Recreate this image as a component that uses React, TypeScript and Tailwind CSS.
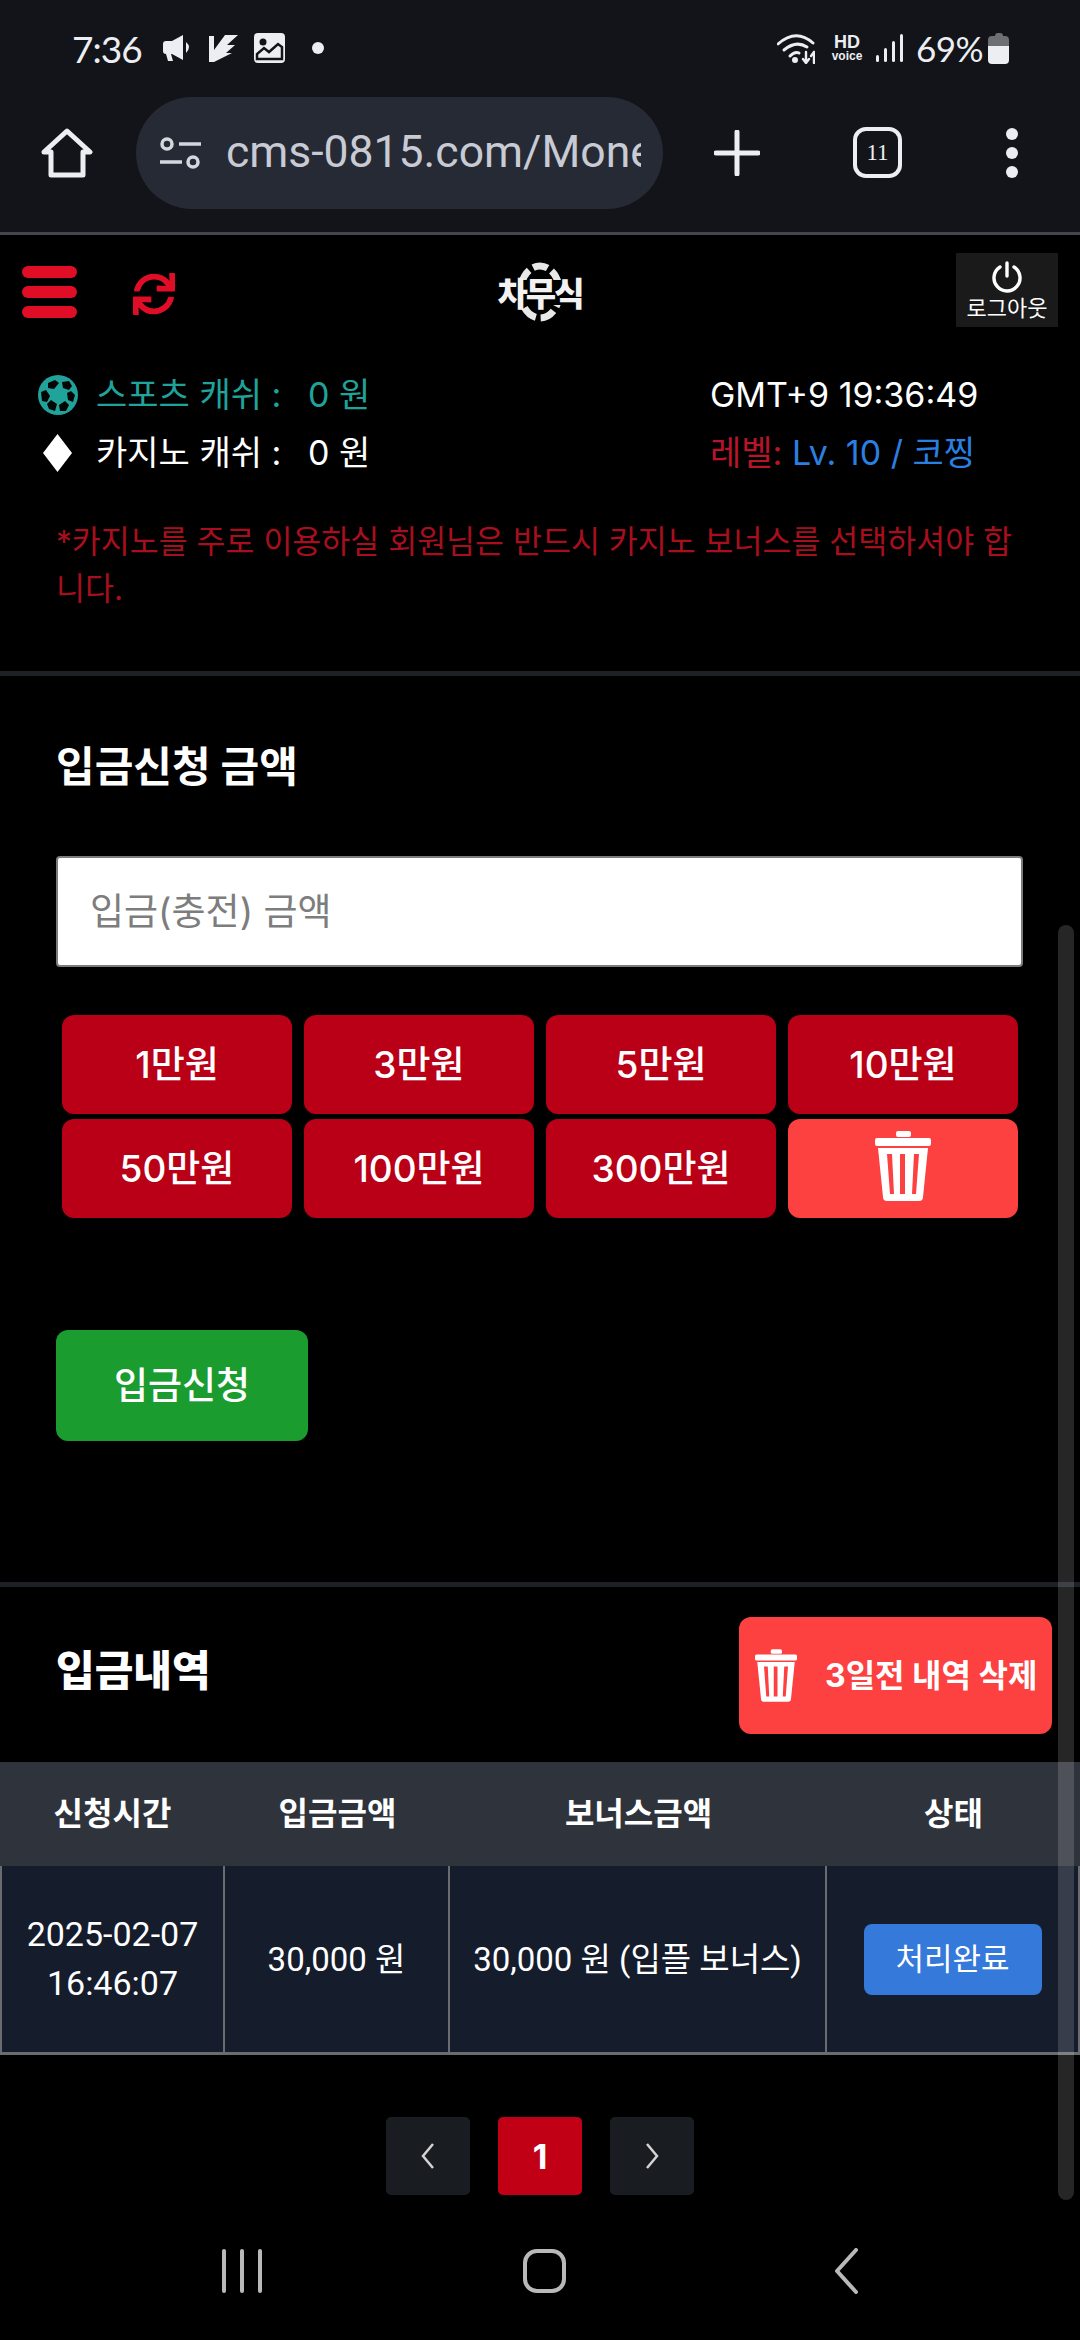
import { FaSync } from "react-icons/fa"

function TrashIcon({ className }: { className: string }) {
  return (
    <svg viewBox="0 0 56 70" className={className} fill="#fff">
      <rect x="21" y="0" width="15" height="6" rx="2" />
      <rect x="0" y="7" width="56" height="8" rx="2" />
      <path
        fillRule="evenodd"
        d="M3 17H53L48 66Q48 70 44 70H12Q8 70 8 66ZM12 23L15 63H19L17 23ZM25 23V63H30V23ZM39 23L37 63H41L44 23Z"
      />
    </svg>
  )
}

function SoccerIcon() {
  return (
    <svg viewBox="0 0 40 40" className="w-[40px] h-[40px]">
      <circle cx="20" cy="20" r="20" fill="#1fa39a" />
      <g fill="#050505">
        <path d="M10 8L17 5L21 8L16 14L10 13Z" />
        <path d="M24 7L31 6L34 11L31 15L25 13Z" />
        <path d="M3 17L8 15L12 21L9 27L4 26Z" />
        <path d="M29 18L33 16L37 20L35 27L30 25Z" />
        <path d="M9 29L13 25L19 29L17 36L11 34Z" />
        <path d="M21 30L27 26L31 30L28 36L22 36Z" />
      </g>
    </svg>
  )
}

function Chrome() {
  return (
    <div className="h-[235px] bg-[#12141a] border-b-[3px] border-[#44464f] text-[#eceef2]">
      {/* status bar */}
      <div className="flex items-center h-[96px] pl-[72px] pr-[71px]">
        <span className="w-[71px] font-['Lato',sans-serif] text-[37px] leading-none tracking-[-1px]">7:36</span>
        <svg viewBox="0 0 29 26" className="w-[29px] h-[26px] ml-[20px]" fill="#eceef2">
          <path d="M0 9Q0 6 3 6H9L20 0V25L9 19H8L10 26H5L3 19Q0 19 0 16Z" />
          <path d="M23 7Q29 12 23 18Z" />
        </svg>
        <svg viewBox="0 0 29 28" className="w-[29px] h-[28px] ml-[17px]" fill="#eceef2">
          <path d="M0 2H5V16L16 1H29L18 11H26L17 19H23L5 28H0Z" />
        </svg>
        <svg viewBox="0 0 31 30" className="w-[31px] h-[30px] ml-[16px]">
          <rect width="31" height="30" rx="4" fill="#eceef2" />
          <circle cx="9" cy="9" r="3.5" fill="#12141a" />
          <path d="M3 26V21L10 15L15 19L24 11L28 14V26Z" fill="none" stroke="#12141a" strokeWidth="2.5" />
        </svg>
        <span className="w-[12px] h-[12px] rounded-full bg-[#eceef2] ml-[27px]" />
        <div className="flex-1" />
        <svg viewBox="0 0 38 32" className="w-[38px] h-[32px]" fill="none" stroke="#eceef2" strokeWidth="3" strokeLinecap="round">
          <path d="M1 12Q19 -4 36 11" />
          <path d="M7 18Q19 8 30 15" />
          <path d="M13 24Q18 19 22 21" />
          <circle cx="18" cy="28" r="1.5" fill="#eceef2" />
          <path d="M29 20V31M26 27L29 31L32 27" strokeWidth="2.4" />
          <path d="M37 31V20M34 24L37 20" strokeWidth="2.4" />
        </svg>
        <div className="flex flex-col items-center w-[34px] ml-[15px] font-['Liberation_Sans',sans-serif] font-bold">
          <span className="text-[18px] leading-[15px]">HD</span>
          <span className="text-[12px] leading-[12px]">voice</span>
        </div>
        <div className="flex items-end gap-[5px] h-[28px] ml-[12px]">
          <span className="w-[3px] h-[7px] bg-[#eceef2] rounded-full" />
          <span className="w-[3px] h-[14px] bg-[#eceef2] rounded-full" />
          <span className="w-[3px] h-[21px] bg-[#eceef2] rounded-full" />
          <span className="w-[3px] h-[28px] bg-[#eceef2] rounded-full" />
        </div>
        <span className="ml-[13px] w-[68px] font-['Lato',sans-serif] text-[35px] leading-none tracking-[-0.5px]">69%</span>
        <div className="flex flex-col items-center w-[21px] h-[31px] ml-[4px]">
          <span className="w-[8px] h-[3px] bg-[#6e6f73] rounded-t-sm" />
          <span className="w-full h-[10px] bg-[#6e6f73] rounded-t-[4px]" />
          <span className="w-full flex-1 bg-[#eceef2] rounded-b-[4px]" />
        </div>
      </div>
      {/* url bar */}
      <div className="flex items-center h-[113px] pl-[41px]">
        <svg viewBox="0 0 52 50" className="w-[52px] h-[50px]" fill="none" stroke="#eceef2" strokeWidth="5" strokeLinejoin="round">
          <path d="M3 24L26 3L49 24H42V47H10V24Z" />
        </svg>
        <div className="flex items-center w-[527px] h-[112px] ml-[43px] rounded-full bg-[#262a35] pl-[24px]">
          <svg viewBox="0 0 41 34" className="w-[41px] h-[34px] shrink-0" fill="none" stroke="#d5d7de" strokeWidth="3.5">
            <circle cx="7" cy="8" r="5" />
            <path d="M19 8H41M0 26H22" />
            <circle cx="33" cy="26" r="5" />
          </svg>
          <div className="w-[415px] ml-[25px] overflow-hidden whitespace-nowrap font-['Roboto',sans-serif] text-[44.5px] leading-none text-[#c8cbd4]">
            cms-0815.com/Money
          </div>
        </div>
        <svg viewBox="0 0 46 46" className="w-[46px] h-[46px] ml-[51px]" stroke="#eceef2" strokeWidth="5" strokeLinecap="round">
          <path d="M23 2V44M2 23H44" />
        </svg>
        <div className="flex items-center justify-center w-[49px] h-[51px] ml-[93px] rounded-[13px] border-[4px] border-[#eceef2] font-['Liberation_Serif',serif] text-[23px] leading-none">
          11
        </div>
        <div className="flex flex-col gap-[7px] ml-[104px]">
          <span className="w-[12px] h-[12px] rounded-full bg-[#eceef2]" />
          <span className="w-[12px] h-[12px] rounded-full bg-[#eceef2]" />
          <span className="w-[12px] h-[12px] rounded-full bg-[#eceef2]" />
        </div>
      </div>
    </div>
  )
}

function Logo() {
  return (
    <div className="relative flex items-center justify-center w-[90px] h-[60px]">
      <svg viewBox="0 0 46 60" className="absolute left-[22px] top-0 w-[46px] h-[60px]" fill="none">
        <ellipse cx="23" cy="30" rx="19.5" ry="26" stroke="#e8e8e8" strokeWidth="7" strokeDasharray="15 5" />
      </svg>
      <span className="relative bg-black leading-[25px] text-[33px] font-black tracking-[-2px] text-[#f2f2f2] font-['Noto_Sans_CJK_KR',sans-serif]">
        차무식
      </span>
    </div>
  )
}

function TopSection() {
  return (
    <div className="h-[441px] border-b-[5px] border-[#1d2126]">
      <div className="flex items-center h-[110px] pl-[22px] pr-[22px]">
        <div className="flex flex-col gap-[8px] w-[55px] mt-[4px]">
          <span className="h-[12px] rounded-full bg-[#e00d26]" />
          <span className="h-[12px] rounded-full bg-[#e00d26]" />
          <span className="h-[12px] rounded-full bg-[#e00d26]" />
        </div>
        <FaSync className="w-[42px] h-[42px] ml-[56px] mt-[8px] text-[#e00d26]" />
        <div className="ml-[320px] mt-[4px]">
          <Logo />
        </div>
        <div className="flex flex-col items-center justify-center w-[102px] h-[74px] ml-auto bg-[#1a1a1a] text-white">
          <svg viewBox="0 0 32 32" className="w-[32px] h-[32px]" fill="none" stroke="#fff" strokeWidth="3.4" strokeLinecap="round">
            <path d="M16 2V15" />
            <path d="M9 6A13 13 0 1 0 23 6" />
          </svg>
          <span className="text-[22px] leading-[26px] font-['Noto_Sans_CJK_KR',sans-serif]">로그아웃</span>
        </div>
      </div>
      <div className="mt-[21px] font-['Inter','Noto_Sans_CJK_KR',sans-serif] text-[34px] leading-[58px]">
        <div className="flex items-center pl-[38px]">
          <SoccerIcon />
          <span className="ml-[18px] w-[212px] text-[#1fa39a] whitespace-nowrap">스포츠 캐쉬 :</span>
          <span className="w-[402px] text-[#1fa39a]">0 원</span>
          <span className="text-white whitespace-nowrap">GMT+9 19:36:49</span>
        </div>
        <div className="flex items-center pl-[43px]">
          <svg viewBox="0 0 29 38" className="w-[29px] h-[38px]" fill="#fff">
            <path d="M14.5 0L29 19L14.5 38L0 19Z" />
          </svg>
          <span className="ml-[24px] w-[212px] text-white whitespace-nowrap">카지노 캐쉬 :</span>
          <span className="w-[402px] text-white">0 원</span>
          <span className="whitespace-nowrap">
            <span className="text-[#b8142a]">레벨: </span>
            <span className="text-[#2b7fe0]">Lv. 10 / 코찡</span>
          </span>
        </div>
      </div>
      <p className="mt-[36px] pl-[56px] w-[1026px] text-[31.5px] leading-[47px] text-[#a80f1e] font-['Inter','Noto_Sans_CJK_KR',sans-serif]">
        *카지노를 주로 이용하실 회원님은 반드시 카지노 보너스를 선택하셔야 합니다.
      </p>
    </div>
  )
}

const amounts = ["1만원", "3만원", "5만원", "10만원", "50만원", "100만원", "300만원"]

function DepositForm() {
  return (
    <div className="h-[911px] pt-[67px] px-[56px] border-b-[5px] border-[#1d2126] font-['Inter','Noto_Sans_CJK_KR',sans-serif]">
      <h2 className="text-[42px] leading-[48px] font-bold text-white">입금신청 금액</h2>
      <div className="flex items-center w-[967px] h-[111px] mt-[65px] px-[32px] bg-white rounded-[4px] border-2 border-[#7c7c7c] text-[37px] text-[#7d7d7d]">
        입금(충전) 금액
      </div>
      <div className="grid grid-cols-[230px_230px_230px_230px] auto-rows-[99px] gap-x-[12px] gap-y-[5px] mt-[48px] ml-[6px]">
        {amounts.map((a) => (
          <div key={a} className="flex items-center justify-center rounded-[12px] bg-[#b90017] text-[37px] font-medium text-white">
            {a}
          </div>
        ))}
        <div className="flex items-center justify-center rounded-[12px] bg-[#fd4040]">
          <TrashIcon className="w-[56px] h-[70px] mb-[6px]" />
        </div>
      </div>
      <div className="flex items-center justify-center w-[252px] h-[111px] mt-[112px] rounded-[12px] bg-[#1a9c2f] text-[37px] font-medium text-white">
        입금신청
      </div>
    </div>
  )
}

function History() {
  return (
    <div className="font-['Inter','Noto_Sans_CJK_KR',sans-serif]">
      <div className="flex items-start justify-between h-[175px] pt-[30px] pl-[56px] pr-[28px]">
        <h2 className="mt-[30px] text-[42px] leading-[48px] font-black text-white">입금내역</h2>
        <div className="flex items-center w-[313px] h-[117px] pl-[16px] rounded-[12px] bg-[#fd4040]">
          <TrashIcon className="w-[42px] h-[53px]" />
          <span className="ml-[28px] text-[32px] font-bold text-white whitespace-nowrap">3일전 내역 삭제</span>
        </div>
      </div>
      <div className="grid grid-cols-[225px_225px_377px_253px] h-[104px] items-center text-center bg-[#2f333b] text-[32px] font-bold text-white">
        <span>신청시간</span>
        <span>입금금액</span>
        <span>보너스금액</span>
        <span>상태</span>
      </div>
      <div className="grid grid-cols-[223px_225px_377px_253px] h-[189px] items-stretch text-center bg-[#151c2b] border-b-[3px] border-l-2 border-[#6a6c70] font-['Roboto','Noto_Sans_CJK_KR',sans-serif] text-[33px] leading-[49px] text-white">
        <div className="flex items-center justify-center border-r-2 border-[#6a6c70] text-[34px]">
          <span>
            2025-02-07
            <br />
            16:46:07
          </span>
        </div>
        <div className="flex items-center justify-center border-r-2 border-[#6a6c70]">30,000 원</div>
        <div className="flex items-center justify-center border-r-2 border-[#6a6c70] whitespace-nowrap">30,000 원 (입플 보너스)</div>
        <div className="flex items-center justify-center border-r-2 border-[#6a6c70]">
          <span className="flex items-center justify-center w-[178px] h-[71px] rounded-[8px] bg-[#3579da] text-[31px]">처리완료</span>
        </div>
      </div>
      {/* pagination */}
      <div className="flex justify-center gap-[28px] mt-[62px]">
        <div className="flex items-center justify-center w-[84px] h-[78px] rounded-[5px] bg-[#191c20]">
          <svg viewBox="0 0 16 26" className="w-[16px] h-[26px]" fill="none" stroke="#d4d4d4" strokeWidth="2.5">
            <path d="M13 1L3 13L13 25" />
          </svg>
        </div>
        <div className="flex items-center justify-center w-[84px] h-[78px] rounded-[5px] bg-[#c10016] text-[34px] font-bold text-white">1</div>
        <div className="flex items-center justify-center w-[84px] h-[78px] rounded-[5px] bg-[#191c20]">
          <svg viewBox="0 0 16 26" className="w-[16px] h-[26px]" fill="none" stroke="#d4d4d4" strokeWidth="2.5">
            <path d="M3 1L13 13L3 25" />
          </svg>
        </div>
      </div>
    </div>
  )
}

function NavBar() {
  return (
    <div className="grid grid-cols-[302px_302px_302px] justify-items-center items-center pl-[91px] mt-[53px]">
      <div className="flex gap-[14px]">
        <span className="w-[4px] h-[44px] rounded-full bg-[#b9b9b9]" />
        <span className="w-[4px] h-[44px] rounded-full bg-[#b9b9b9]" />
        <span className="w-[4px] h-[44px] rounded-full bg-[#b9b9b9]" />
      </div>
      <div className="w-[43px] h-[44px] rounded-[14px] border-[4px] border-[#b9b9b9]" />
      <svg viewBox="0 0 24 46" className="w-[24px] h-[46px]" fill="none" stroke="#b9b9b9" strokeWidth="4" strokeLinecap="round" strokeLinejoin="round">
        <path d="M22 2L3 23L22 44" />
      </svg>
    </div>
  )
}

export default function App() {
  return (
    <div className="relative w-[1080px] h-[2340px] overflow-hidden bg-black">
      <Chrome />
      <TopSection />
      <DepositForm />
      <History />
      <NavBar />
      {/* overlay scrollbar */}
      <div className="absolute left-[1058px] top-[925px] w-[16px] h-[1275px] rounded-full bg-white/15" />
    </div>
  )
}
